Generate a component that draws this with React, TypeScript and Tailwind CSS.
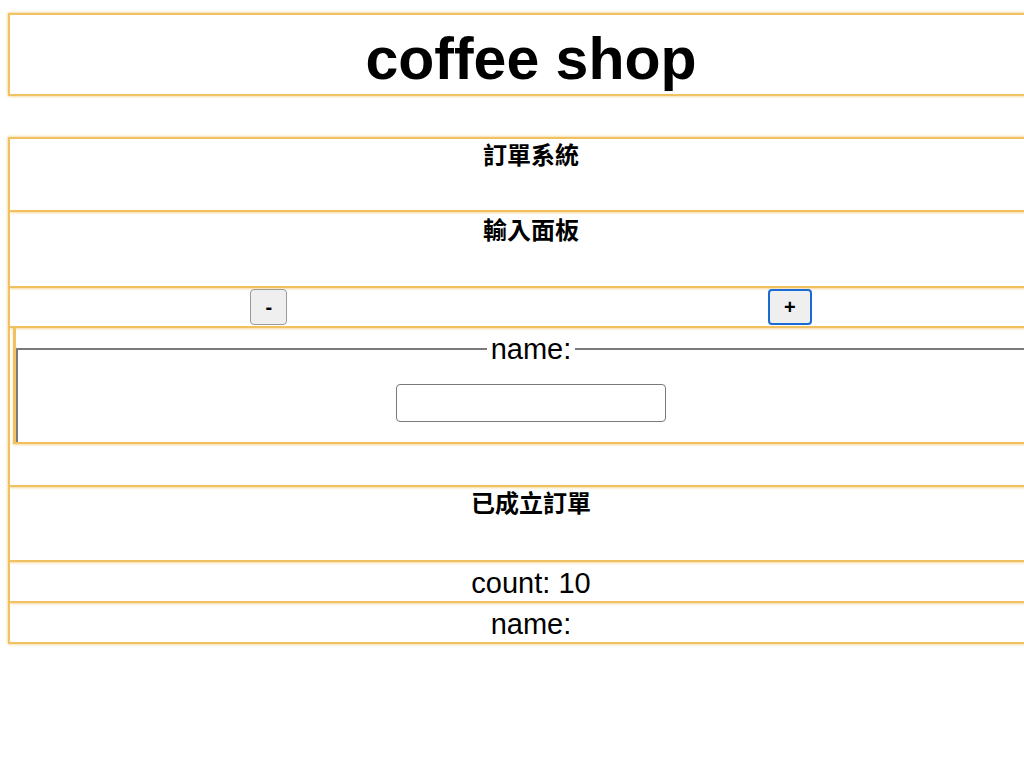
import React from "react";

const font = { fontFamily: '"Liberation Sans", Arial, "Noto Sans CJK TC", sans-serif' };

export default function App() {
  return (
    <div className="w-full overflow-hidden bg-white text-black" style={font}>
      <div className="pl-2 pt-[13px] pb-[134px] w-[1070px]">
        {/* Header */}
        <div className="w-[1046px] h-[83px] border-2 border-[#f1c263] shadow-[0_0_3px_rgba(240,190,90,0.9)] pt-[14px]">
          <h1 className="text-center text-[59px] leading-[60px] font-bold">coffee shop</h1>
        </div>

        {/* Main */}
        <div className="mt-[41px] w-[1046px] border-2 border-[#f1c263] shadow-[0_0_3px_rgba(240,190,90,0.9)]">
          <div className="h-[73px] border-b-2 border-[#f1c263] shadow-[0_1px_2px_rgba(240,190,90,0.6)] pt-[3px]">
            <h4 className="text-center text-[24px] leading-[28px] font-bold">訂單系統</h4>
          </div>
          <div className="h-[76px] border-b-2 border-[#f1c263] shadow-[0_1px_2px_rgba(240,190,90,0.6)] pt-[5px]">
            <h4 className="text-center text-[24px] leading-[28px] font-bold">輸入面板</h4>
          </div>
          <div className="h-[40px] border-b-2 border-[#f1c263] shadow-[0_1px_2px_rgba(240,190,90,0.6)] flex items-center justify-around">
            <button className="h-[36px] px-[14px] bg-[#efefef] border border-[#9a9a9a] rounded-[4px] text-[20px] font-bold leading-none">
              -
            </button>
            <button className="h-[36px] px-[14px] bg-[#efefef] border-2 border-[#1a6bd6] rounded-[4px] text-[20px] font-bold leading-none">
              +
            </button>
          </div>
          <div className="h-[116px] mx-[3px] border-l-[3px] border-r-[3px] border-b-2 border-[#f1c263] shadow-[0_1px_2px_rgba(240,190,90,0.6)] pt-[5px]">
            <fieldset className="border-t-2 border-l-2 border-r-2 border-[#7a7a7a] h-[109px]">
              <legend className="mx-auto px-[4px] text-[29px] leading-[32px]">name:</legend>
              <div className="flex justify-center pt-[19px]">
                <input className="w-[270px] h-[38px] border border-[#7a7a7a] rounded-[4px] bg-white" />
              </div>
            </fieldset>
          </div>
          <div className="h-[43px] border-b-2 border-[#f1c263] shadow-[0_1px_2px_rgba(240,190,90,0.6)]" />
          <div className="h-[75px] border-b-2 border-[#f1c263] shadow-[0_1px_2px_rgba(240,190,90,0.6)] pt-[3px]">
            <h4 className="text-center text-[24px] leading-[28px] font-bold">已成立訂單</h4>
          </div>
          <div className="h-[41px] border-b-2 border-[#f1c263] shadow-[0_1px_2px_rgba(240,190,90,0.6)] flex items-center justify-center">
            <div className="text-[29px] leading-[32px] pt-[2px]">count: 10</div>
          </div>
          <div className="h-[39px] flex items-center justify-center">
            <div className="text-[29px] leading-[32px] pt-[2px]">name:</div>
          </div>
        </div>
      </div>
    </div>
  );
}
